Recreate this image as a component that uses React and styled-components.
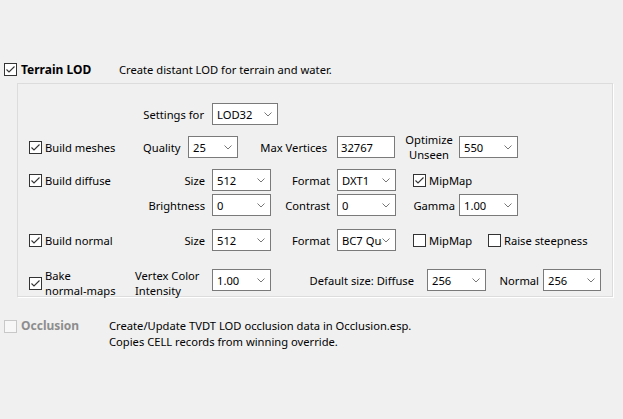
import React from 'react';
import styled, { createGlobalStyle } from 'styled-components';

const Global = createGlobalStyle`
  html, body { margin: 0; padding: 0; background: #f0f0f0; }
  body {
    font-family: "Noto Sans", "Open Sans", sans-serif;
    font-size: 11.2px;
    color: #000;
  }
`;

const Page = styled.div`
  width: 623px;
  height: 419px;
  box-sizing: border-box;
  padding: 62px 0 0 4px;
  display: flex;
  flex-direction: column;
  overflow: hidden;
`;

const Header = styled.div`
  display: flex;
  align-items: center;
  height: 15px;
`;

const HeaderLabel = styled.span`
  width: ${(p) => p.$w}px;
  padding-left: 4px;
  box-sizing: border-box;
  font-weight: 700;
  font-size: 12px;
  white-space: nowrap;
`;

const Desc = styled.div`
  line-height: 16px;
  white-space: nowrap;
`;

const Group = styled.div`
  margin: 6px 0 0 13px;
  width: 596px;
  height: 214px;
  box-sizing: border-box;
  border: 1px solid #dcdcdc;
  box-shadow: 1px 1px 0 #ffffff;
  padding: 0 0 0 11px;
  display: flex;
  flex-direction: column;
`;

const Row = styled.div`
  display: flex;
  align-items: center;
  height: 22px;
  margin-top: ${(p) => p.$mt}px;
`;

const Slot = styled.div`
  width: ${(p) => p.$w}px;
  flex: none;
  box-sizing: border-box;
  display: flex;
  align-items: center;
  justify-content: ${(p) => (p.$right ? 'flex-end' : p.$center ? 'center' : 'flex-start')};
  padding-right: ${(p) => p.$pr || 0}px;
  padding-left: ${(p) => p.$pl || 0}px;
  white-space: nowrap;
`;

const TwoLine = styled.div`
  line-height: 15px;
  padding-top: ${(p) => p.$pt || 0}px;
  text-align: ${(p) => (p.$center ? 'center' : 'left')};
  white-space: nowrap;
`;

const Box = styled.span`
  width: 13px;
  height: 13px;
  flex: none;
  box-sizing: border-box;
  border: 1px solid ${(p) => (p.$disabled ? '#c8c8c8' : '#333333')};
  background: ${(p) => (p.$disabled ? '#f7f7f7' : '#ffffff')};
  display: inline-flex;
  align-items: center;
  justify-content: center;
  margin-top: ${(p) => p.$mt || 0}px;
`;

const CheckLabel = styled.span`
  padding-left: 3px;
`;

const Check = ({ checked, disabled, mt }) => (
  <Box $disabled={disabled} $mt={mt}>
    {checked && (
      <svg width="11" height="11" viewBox="0 0 11 11">
        <polyline points="1.5,5.5 4,8 9.5,2.5" fill="none" stroke="#333" strokeWidth="1.1" />
      </svg>
    )}
  </Box>
);

const ComboBox = styled.div`
  width: ${(p) => p.$w}px;
  height: 22px;
  flex: none;
  box-sizing: border-box;
  border: 1px solid #7a7a7a;
  background: #fff;
  display: flex;
  align-items: center;
  padding: 0 5px 0 4px;
  overflow: hidden;
`;

const ComboText = styled.span`
  flex: 1;
  overflow: hidden;
  white-space: nowrap;
`;

const Combo = ({ w, value }) => (
  <ComboBox $w={w}>
    <ComboText>{value}</ComboText>
    <svg width="8" height="5" viewBox="0 0 8 5">
      <polyline points="0.5,0.5 4,4 7.5,0.5" fill="none" stroke="#777" strokeWidth="1" />
    </svg>
  </ComboBox>
);

const Input = styled.div`
  width: ${(p) => p.$w}px;
  height: 22px;
  flex: none;
  box-sizing: border-box;
  border: 1px solid #7a7a7a;
  background: #fff;
  display: flex;
  align-items: center;
  padding-left: 3px;
`;

const OcclusionRow = styled.div`
  display: flex;
  align-items: flex-start;
  margin-top: 21px;
`;

const OccLabel = styled.div`
  width: ${(p) => p.$w}px;
  padding-left: 4px;
  box-sizing: border-box;
  font-weight: 700;
  font-size: 12px;
  line-height: 16px;
  color: #8d8d8d;
`;

export default function App() {
  return (
    <>
      <Global />
      <Page>
        <Header>
          <Check checked />
          <HeaderLabel $w={102}>Terrain LOD</HeaderLabel>
          <Desc>Create distant LOD for terrain and water.</Desc>
        </Header>
        <Group>
          <Row $mt={19}>
            <Slot $w={183} $right $pr={8}>Settings for</Slot>
            <Combo w={66} value="LOD32" />
          </Row>
          <Row $mt={11}>
            <Slot $w={114}><Check checked /><CheckLabel>Build meshes</CheckLabel></Slot>
            <Slot $w={45}>Quality</Slot>
            <Combo w={50} value="25" />
            <Slot $w={99} $right $pr={10}>Max Vertices</Slot>
            <Input $w={58}>32767</Input>
            <Slot $w={64} $center $pl={4}><TwoLine $center>Optimize<br />Unseen</TwoLine></Slot>
            <Combo w={59} value="550" />
          </Row>
          <Row $mt={11}>
            <Slot $w={106}><Check checked /><CheckLabel>Build diffuse</CheckLabel></Slot>
            <Slot $w={77} $right $pr={7}>Size</Slot>
            <Combo w={59} value="512" />
            <Slot $w={66} $right $pr={7}>Format</Slot>
            <Combo w={59} value="DXT1" />
            <Slot $w={92} $pl={17}><Check checked /><CheckLabel>MipMap</CheckLabel></Slot>
          </Row>
          <Row $mt={3}>
            <Slot $w={106} />
            <Slot $w={77} $right $pr={7}>Brightness</Slot>
            <Combo w={59} value="0" />
            <Slot $w={66} $right $pr={7}>Contrast</Slot>
            <Combo w={59} value="0" />
            <Slot $w={63} $right $pr={4}>Gamma</Slot>
            <Combo w={59} value="1.00" />
          </Row>
          <Row $mt={13}>
            <Slot $w={106}><Check checked /><CheckLabel>Build normal</CheckLabel></Slot>
            <Slot $w={77} $right $pr={7}>Size</Slot>
            <Combo w={59} value="512" />
            <Slot $w={66} $right $pr={7}>Format</Slot>
            <Combo w={59} value="BC7 Quality" />
            <Slot $w={92} $pl={17}><Check /><CheckLabel>MipMap</CheckLabel></Slot>
            <Slot $w={120}><Check /><CheckLabel>Raise steepness</CheckLabel></Slot>
          </Row>
          <Row $mt={18}>
            <Slot $w={106}><Check checked mt={6} /><CheckLabel><TwoLine $pt={6}>Bake<br />normal-maps</TwoLine></CheckLabel></Slot>
            <Slot $w={77}><TwoLine $pt={6}>Vertex Color<br />Intensity</TwoLine></Slot>
            <Combo w={59} value="1.00" />
            <Slot $w={156} $right $pr={13}>Default size: Diffuse</Slot>
            <Combo w={59} value="256" />
            <Slot $w={57} $right $pr={4}>Normal</Slot>
            <Combo w={58} value="256" />
          </Row>
        </Group>
        <OcclusionRow>
          <Check disabled mt={2} />
          <OccLabel $w={92}>Occlusion</OccLabel>
          <Desc>
            Create/Update TVDT LOD occlusion data in Occlusion.esp.<br />
            Copies CELL records from winning override.
          </Desc>
        </OcclusionRow>
      </Page>
    </>
  );
}
